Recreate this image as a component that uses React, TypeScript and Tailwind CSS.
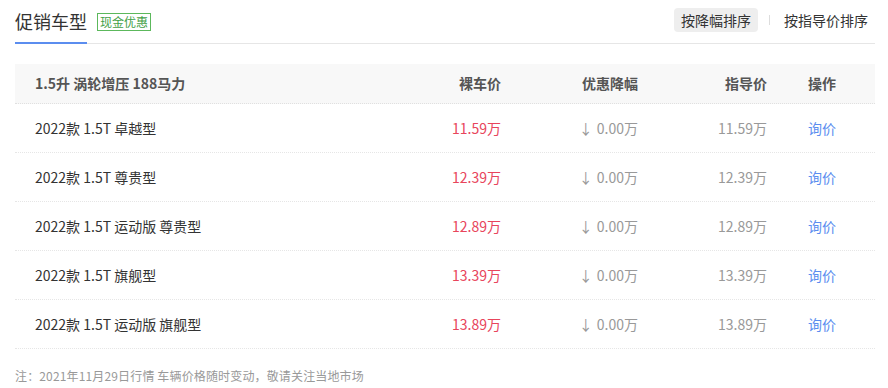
import React from 'react';

const rows = [
  { name: '2022款 1.5T 卓越型', price: '11.59万', guide: '11.59万' },
  { name: '2022款 1.5T 尊贵型', price: '12.39万', guide: '12.39万' },
  { name: '2022款 1.5T 运动版 尊贵型', price: '12.89万', guide: '12.89万' },
  { name: '2022款 1.5T 旗舰型', price: '13.39万', guide: '13.39万' },
  { name: '2022款 1.5T 运动版 旗舰型', price: '13.89万', guide: '13.89万' },
];

const App: React.FC = () => {
  return (
    <div
      className="w-[888px] h-[388px] bg-white overflow-hidden text-[#333]"
      style={{ fontFamily: '"Noto Sans CJK SC", "Liberation Sans", sans-serif' }}
    >
      {/* Tab header */}
      <div className="mx-[15px] w-[860px] h-[44px] flex items-start border-b border-[#e6e6e6]">
        <div className="h-[44px] -mb-px border-b-2 border-[#5b8def] pt-[8px] text-[18px] leading-[26px] text-[#333]">
          促销车型
        </div>
        <div className="ml-[10px] mt-[13px] h-[18px] px-[2px] border border-[#5cb85c] text-[#43a047] text-[12px] leading-[16px]">
          现金优惠
        </div>
        <div className="ml-auto mt-[8px] flex items-center text-[14px] leading-[24px]">
          <div className="px-[7px] h-[24px] bg-[#eeeeee] rounded-sm text-[#333]">按降幅排序</div>
          <div className="ml-[11px] mr-[7px] w-px h-[10px] bg-[#dddddd]" />
          <div className="px-[7px] h-[24px] text-[#333]">按指导价排序</div>
        </div>
      </div>

      {/* Table */}
      <div className="mx-[15px] mt-[20px] w-[860px]">
        <div className="flex items-center h-[40px] bg-[#f8f8f8] border-b border-dotted border-[#e0e0e0] text-[14px] font-bold text-[#555]">
          <div className="w-[486px] pl-[20px] flex justify-between">
            <span>1.5升 涡轮增压 188马力</span>
            <span>裸车价</span>
          </div>
          <div className="w-[137px] text-right">优惠降幅</div>
          <div className="w-[129px] text-right">指导价</div>
          <div className="pl-[41px]">操作</div>
        </div>
        {rows.map((r) => (
          <div
            key={r.name}
            className="flex items-center h-[49px] border-b border-dotted border-[#e6e6e6] text-[14px]"
          >
            <div className="w-[486px] pl-[20px] flex justify-between">
              <span className="text-[#333]">{r.name}</span>
              <span className="text-[#e8455c]">{r.price}</span>
            </div>
            <div className="w-[137px] text-right text-[#999]">
              <span className="mr-[4px]">↓</span>0.00万
            </div>
            <div className="w-[129px] text-right text-[#999]">{r.guide}</div>
            <div className="pl-[41px] text-[#5b8def]">询价</div>
          </div>
        ))}
      </div>

      <div className="mx-[15px] mt-[18px] text-[12px] leading-[18px] tracking-[0.15px] text-[#999]">
        注：2021年11月29日行情 车辆价格随时变动，敬请关注当地市场
      </div>
    </div>
  );
};

export default App;
